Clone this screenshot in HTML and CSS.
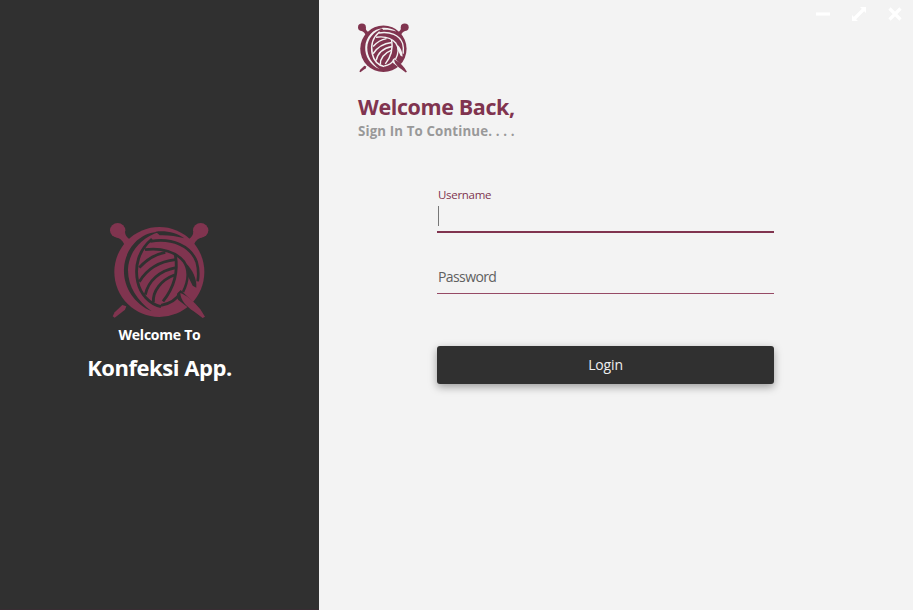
FILE: index.html
```html
<!DOCTYPE html>
<html lang="en">
<head>
<meta charset="utf-8">
<title>Konfeksi App</title>
<link rel="stylesheet" href="styles.css">
</head>
<body>
<svg class="defs" width="0" height="0" aria-hidden="true">
  <symbol id="yarn" viewBox="29 21 297 291">
    <g class="yarn-fill">
      <ellipse cx="52" cy="46" rx="23" ry="22"/>
      <ellipse cx="301" cy="46" rx="23" ry="22"/>
      <path d="M46 66L74 50C75 63 80 67 93 76L74 94C69 79 62 71 46 66Z"/>
      <path d="M307 66L279 50C278 63 273 67 260 76L279 94C284 79 291 71 307 66Z"/>
      <circle cx="177" cy="171" r="135"/>
      <path d="M66 270L78 274L74 284L43 308L37 304L43 292Z"/>
    </g>
    <g class="yarn-gap">
      <path d="M176 51C117 51 74 103 71 160C68 215 100 265 154 289C111 256 82 214 83 163C85 112 121 68 176 51Z"/>
      <path d="M166 50C196 46 230 53 252 70C226 63 202 60 178 61Z"/>
      <path d="M258 146C276 164 290 190 288 218L277 212L262 182Z"/>
      <path d="M230 236L241 225L293 275L312 307L293 301L233 254Z"/>
    </g>
    <g class="yarn-line">
      <path d="M155 72C115 105 102 152 112 200C120 237 146 266 182 275"/>
      <path class="wide" d="M150 79C216 68 271 92 289 141C295 162 295 179 292 199"/>
      <path class="wide" d="M134 104C184 97 228 112 250 139C267 164 264 199 248 231"/>
      <path d="M117 158C139 133 163 118 195 112"/>
      <path d="M117 200C143 158 179 139 225 134"/>
      <path d="M135 239C144 197 178 167 227 158"/>
      <path d="M159 262C157 229 182 195 222 180"/>
      <path d="M225 119C233 163 227 210 188 259"/>
      <path d="M182 271C209 266 229 253 240 234"/>
    </g>
    <path class="yarn-fill" d="M240 234C259 241 281 259 300 283L314 305L307 309L280 289C258 274 240 255 240 234Z"/>
  </symbol>
</svg>
<main class="window">
  <aside class="brand">
    <svg class="brand-logo"><use href="#yarn"/></svg>
    <p class="brand-welcome">Welcome To</p>
    <h1 class="brand-name">Konfeksi App.</h1>
  </aside>
  <section class="content">
    <header class="heading">
      <svg class="small-logo"><use href="#yarn"/></svg>
      <div class="controls">
        <svg viewBox="0 0 16 16"><path d="M1 8H15"/></svg>
        <svg viewBox="0 0 16 16"><path d="M3 13L13 3"/><path class="solid" d="M9 1H15V7ZM1 9V15H7Z"/></svg>
        <svg viewBox="0 0 16 16"><path d="M2.5 2.5L13.5 13.5M13.5 2.5L2.5 13.5"/></svg>
      </div>
    </header>
    <h2 class="title">Welcome Back,</h2>
    <p class="subtitle">Sign In To Continue. . . .</p>
    <form class="form">
      <div class="field focused"><label>Username</label><span class="caret"></span></div>
      <div class="field"><label>Password</label></div>
      <button class="login" type="button">Login</button>
    </form>
  </section>
</main>
</body>
</html>
```

FILE: styles.css
```css
* { box-sizing: border-box; }
body { margin: 0; font-family: "Open Sans", "Noto Sans", sans-serif; }
h1, h2, p { margin: 0; white-space: nowrap; }
.defs { position: absolute; }
.window { display: flex; width: 913px; height: 610px; background: #f3f3f3; overflow: hidden; }
.brand { --gap: #303030; width: 319px; padding-top: 222px; background: #303030; border-bottom: 1px solid #382c32; color: #fff; text-align: center; display: flex; flex-direction: column; align-items: center; }
.brand-logo { width: 99px; height: 97px; flex: none; }
.brand-welcome { font-size: 14px; font-weight: 700; line-height: 20px; margin-top: 6px; letter-spacing: -.25px; }
.brand-name { font-size: 22px; font-weight: 700; line-height: 30px; margin-top: 7px; letter-spacing: -.45px; }
.content { --gap: #f3f3f3; flex: 1; padding-left: 39px; }
.heading { display: flex; justify-content: space-between; height: 73px; }
.small-logo { width: 51px; height: 50px; margin-top: 23px; }
.controls { display: flex; gap: 20px; padding: 6px 10px 0 0; }
.controls svg { width: 16px; height: 16px; fill: none; stroke: #fff; stroke-width: 3.2; }
.controls .solid { fill: #fff; stroke: none; }
.title { margin-top: 19px; font-size: 21.5px; line-height: 30px; font-weight: 700; color: #80344f; letter-spacing: -.38px; }
.subtitle { font-size: 13.3px; line-height: 18px; font-weight: 700; color: #999; letter-spacing: .13px; }
.form { width: 337px; margin: 46px 0 0 79px; }
.field { height: 61px; border-bottom: 1px solid #964a65; padding: 34px 1px 0; color: #606060; font-size: 14px; line-height: 20px; letter-spacing: -.6px; }
.field label { display: block; }
.focused { height: 47px; padding-top: 1px; border-bottom: 2px solid #80344f; color: #80344f; font-size: 11.5px; line-height: 16px; letter-spacing: -.3px; }
.caret { display: block; width: 1px; height: 20px; margin: 3px 0 0 0; background: #777; }
.login { display: block; width: 337px; height: 38px; margin-top: 52px; padding: 0; border: 0; border-radius: 3px; background: #303030; color: #eee; font: 14px/38px "Open Sans", "Noto Sans", sans-serif; letter-spacing: -.15px; box-shadow: 0 3px 8px rgba(0,0,0,.36); }
.yarn-fill { fill: #80344f; }
.yarn-gap { fill: var(--gap); }
.yarn-line { fill: none; stroke: var(--gap); stroke-width: 8.5; }
.yarn-line .wide { stroke-width: 8; }
```
